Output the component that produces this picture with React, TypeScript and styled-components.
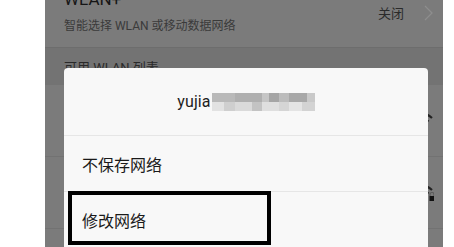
import React from "react";
import styled, { createGlobalStyle } from "styled-components";

const Global = createGlobalStyle`
  html, body { margin: 0; padding: 0; background: #ffffff; }
  body { font-family: Roboto, "Noto Sans CJK SC", sans-serif; }
  * { box-sizing: border-box; }
`;

const Page = styled.div`
  display: flex;
  width: 454px;
  height: 247px;
  overflow: hidden;
  background: #ffffff;
`;

const Margin = styled.div<{ $w: number }>`
  flex: 0 0 ${(p) => p.$w}px;
  background: #ffffff;
`;

const Phone = styled.div`
  position: relative;
  flex: 0 0 398px;
  height: 247px;
  overflow: hidden;
  background: #7b7b7b;
  display: flex;
  flex-direction: column;
`;

const TopRow = styled.div`
  margin-top: -11px;
  padding: 0 10px 0 19px;
  display: flex;
  align-items: flex-start;
  border-bottom: 1px solid #6d6d6d;
  flex: 0 0 auto;
  height: 59px;
`;

const TopText = styled.div`
  flex: 1;
  display: flex;
  flex-direction: column;
`;

const Title = styled.div`
  font-family: Roboto, "Noto Sans CJK SC", sans-serif;
  font-size: 17px;
  line-height: 20px;
  color: #161616;
`;

const Sub = styled.div`
  margin-top: 9px;
  font-family: Roboto, "Noto Sans CJK SC", sans-serif;
  font-size: 12px;
  line-height: 16px;
  color: #3a3a3a;
`;

const Value = styled.div`
  margin-top: 16px;
  font-family: "Noto Sans CJK SC", sans-serif;
  font-size: 13px;
  line-height: 16px;
  color: #2a2a2a;
`;

const Chevron = styled.svg`
  margin-top: 16px;
  margin-left: 20px;
  flex: 0 0 auto;
`;

const SectionHead = styled.div`
  height: 37px;
  padding: 12px 0 0 19px;
  background: #737373;
  font-family: Roboto, "Noto Sans CJK SC", sans-serif;
  font-size: 13px;
  line-height: 16px;
  color: #2a2a2a;
  flex: 0 0 auto;
`;

const ListRow = styled.div`
  height: 72px;
  flex: 0 0 auto;
  display: flex;
  align-items: center;
  justify-content: flex-end;
  padding-right: 9px;
  border-bottom: 1px solid #727272;
`;

const Dialog = styled.div`
  position: absolute;
  left: 19px;
  top: 68px;
  width: 364px;
  bottom: 0;
  background: #f8f8f8;
  border-radius: 4px 4px 0 0;
  display: flex;
  flex-direction: column;
`;

const DialogTitle = styled.div`
  height: 68px;
  display: flex;
  align-items: center;
  justify-content: center;
  border-bottom: 1px solid #e6e6e6;
`;

const SSID = styled.span`
  font-family: Roboto, "Noto Sans", sans-serif;
  font-size: 16px;
  color: #1e1e1e;
  letter-spacing: 0.1px;
`;

const Mosaic = styled.svg`
  display: block;
  margin-left: 1px;
`;

const Option = styled.div<{ $last?: boolean }>`
  position: relative;
  height: ${(p) => (p.$last ? 55 : 56)}px;
  display: flex;
  align-items: center;
  padding-left: 18px;
  font-family: "Noto Sans CJK SC", sans-serif;
  font-size: 16px;
  color: #1a1a1a;
  border-bottom: ${(p) => (p.$last ? "none" : "1px solid #e6e6e6")};
`;

const Highlight = styled.div`
  position: absolute;
  left: 4px;
  top: -1px;
  width: 203px;
  height: 54px;
  border: 4px solid #000000;
`;

const topRow = [
  ["#b9b9b9", 23],
  ["#afafaf", 27],
  ["#c5c5c5", 7],
  ["#a5a5a5", 10],
  ["#bcbcbc", 10],
  ["#a8a8a8", 18],
  ["#c9c9c9", 8],
] as const;

const bottomRow = [
  ["#e2e2e2", 12],
  ["#cfcfcf", 11],
  ["#dadada", 17],
  ["#c3c3c3", 10],
  ["#dfdfdf", 17],
  ["#d5d5d5", 10],
  ["#e4e4e4", 13],
  ["#d3d3d3", 13],
] as const;

function MosaicBlock() {
  let x1 = 0;
  let x2 = 0;
  return (
    <Mosaic width="103" height="18" viewBox="0 0 103 18">
      {topRow.map(([c, w], i) => {
        const r = <rect key={"t" + i} x={x1} y={0} width={w} height={9} fill={c} />;
        x1 += w;
        return r;
      })}
      {bottomRow.map(([c, w], i) => {
        const r = <rect key={"b" + i} x={x2} y={9} width={w} height={9} fill={c} />;
        x2 += w;
        return r;
      })}
    </Mosaic>
  );
}

function WifiIcon({ lock }: { lock?: boolean }) {
  return (
    <svg width="24" height="24" viewBox="0 0 24 24">
      <path d="M2 9 Q12 0 22 9" fill="none" stroke="#222" strokeWidth="2.2" />
      <path d="M5.5 12.5 Q12 6 18.5 12.5" fill="none" stroke="#222" strokeWidth="2.2" />
      <path d="M9 16 Q12 13 15 16" fill="none" stroke="#222" strokeWidth="2.2" />
      {lock && (
        <>
          <path d="M20 15 v-1.5 a2 2 0 0 1 4 0 V15" fill="none" stroke="#5a5a5a" strokeWidth="1.2" />
          <rect x="19.5" y="15" width="5" height="5" fill="#111" />
        </>
      )}
    </svg>
  );
}

export default function App() {
  return (
    <>
      <Global />
      <Page>
        <Margin $w={45} />
        <Phone>
          <TopRow>
            <TopText>
              <Title>WLAN+</Title>
              <Sub>智能选择 WLAN 或移动数据网络</Sub>
            </TopText>
            <Value>关闭</Value>
            <Chevron width="9" height="16" viewBox="0 0 9 16">
              <path d="M1 1 L8 8 L1 15" fill="none" stroke="#8e8e8e" strokeWidth="1.2" />
            </Chevron>
          </TopRow>
          <SectionHead>可用 WLAN 列表</SectionHead>
          <ListRow>
            <WifiIcon />
          </ListRow>
          <ListRow>
            <WifiIcon lock />
          </ListRow>
          <Dialog>
            <DialogTitle>
              <SSID>yujia</SSID>
              <MosaicBlock />
            </DialogTitle>
            <Option>不保存网络</Option>
            <Option $last>
              修改网络
              <Highlight />
            </Option>
          </Dialog>
        </Phone>
        <Margin $w={11} />
      </Page>
    </>
  );
}
